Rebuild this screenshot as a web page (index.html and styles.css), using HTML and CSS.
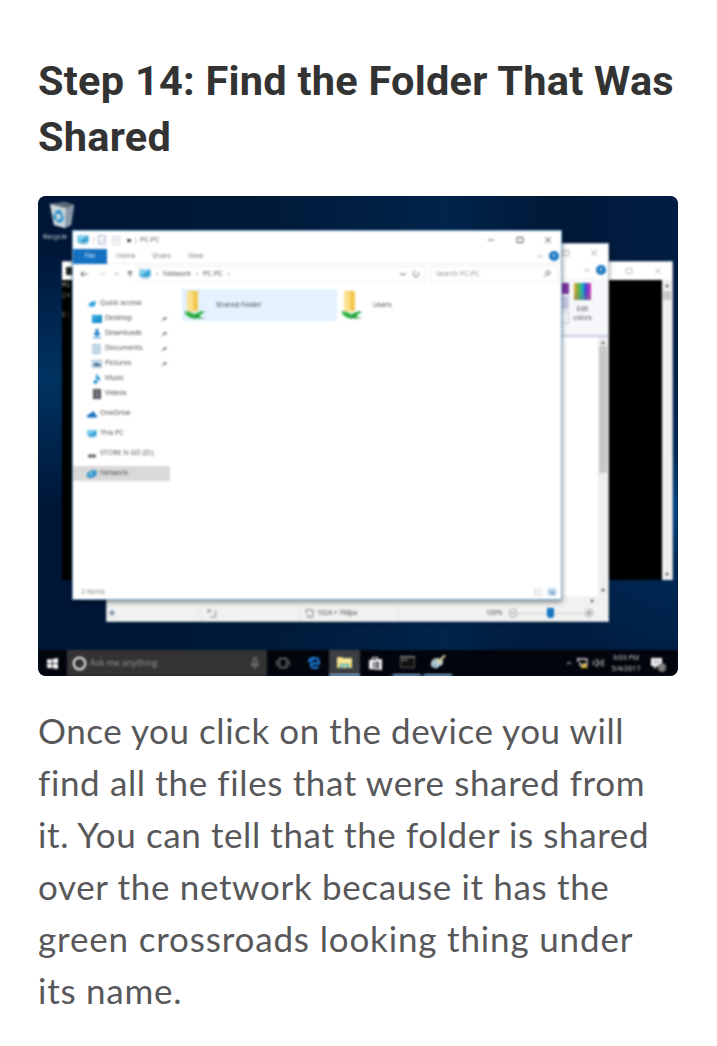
FILE: index.html
```html
<!DOCTYPE html>
<html lang="en">
<head>
<meta charset="utf-8">
<title>Step 14: Find the Folder That Was Shared</title>
<link rel="stylesheet" href="styles.css">
</head>
<body>
<svg class="defs" width="0" height="0" aria-hidden="true">
  <symbol id="pc" viewBox="0 0 12 10"><rect x=".5" y=".5" width="11" height="7" fill="#2f9fd4"/><path d="M1 1h10L3 6H1z" fill="#7fd0ef"/><path d="M5 7h3v1h2v1.3H2.500V8H5z" fill="#7cb4cf"/></symbol>
  <symbol id="folder" viewBox="0 0 22 30"><path d="M3 1h11v20H3z" fill="#f1c950"/><path d="M3 1l6 2v20l-6-3z" fill="#fbe08d"/><path d="M1 21l5 1 4 2 8-3 3 1-6 4 4 2-4 1-5-2-4 1-5-4z" fill="#35ba4b"/><path d="M4 24l6 3 7-4-3 4-4 2z" fill="#168b35"/><path d="M0 21l4 1M16 28h5" stroke="#a8b7b4"/></symbol>
  <symbol id="pin" viewBox="0 0 6 6"><path d="M.5 5.500L3 3M2 1.500L4.500 4M3 2.500L4.500 1l1 1L4 3.500z" stroke="#777" stroke-width=".9" fill="#777"/></symbol>
  <symbol id="x" viewBox="0 0 8 8"><path d="M1 1l6 6M7 1L1 7" stroke="currentColor" fill="none"/></symbol>
  <symbol id="max" viewBox="0 0 8 8"><path d="M1 1.500h6v5H1z" stroke="currentColor" fill="none"/></symbol>
  <symbol id="up" viewBox="0 0 8 8"><path d="M1.500 5.500L4 3l2.500 2.500" stroke="currentColor" fill="none"/></symbol>
  <symbol id="down" viewBox="0 0 8 8"><path d="M1.500 3L4 5.500 6.500 3" stroke="currentColor" fill="none"/></symbol>
</svg>
<main class="article">
  <h2 class="title">Step 14: Find the Folder That Was Shared</h2>

  <div class="shot"><div class="desktop">
    <div class="recycle">
      <svg width="28" height="28" viewBox="0 0 28 28"><path d="M2 3l15-2 9 3-3 20-6 3-11-3z" fill="#a9b8c4"/><path d="M2 3l16 4-1 20-11-3z" fill="#cbd5da"/><path d="M18 7l8-3-3 20-6 3z" fill="#8999a8"/><path d="M2 3l15-2 9 3-8 3z" fill="#596875"/><path d="M7 13l4-3 3 4M15 15l-2 5H9M8 19l-2-5" fill="none" stroke="#1587cf" stroke-width="2.300"/></svg>
      <span>Recycle</span>
    </div>

    <section class="win console">
      <header class="console-bar"><i class="console-icon"></i><span class="grow"></span><svg class="i8"><use href="#max"/></svg><svg class="i8"><use href="#x"/></svg></header>
      <div class="console-body">
        <pre class="console-text">Mi
(c

C:</pre>
        <div class="scroll"><i class="arrow-up"></i><i class="thumb"></i><span class="grow"></span><i class="arrow-down"></i></div>
      </div>
    </section>

    <section class="win paint">
      <header class="paint-bar"><svg class="i8"><use href="#max"/></svg><svg class="i8"><use href="#x"/></svg></header>
      <div class="paint-help"><svg class="i8"><use href="#up"/></svg><b class="help">?</b></div>
      <div class="ribbon">
        <div class="swatches"><i class="sw-a"></i><i class="sw-b"></i><i class="sw-c"></i></div>
        <div class="edit"><i class="rainbow"></i><span>Edit<br>colors</span></div>
      </div>
      <div class="paint-canvas"><div class="scroll"><i class="arrow-up"></i><i class="thumb tall"></i><span class="grow"></span><i class="arrow-down"></i></div></div>
      <div class="hscroll"><i class="arrow-right"></i></div>
      <footer class="paint-status">
        <span class="cell c1"><svg width="8" height="8" viewBox="0 0 8 8"><path d="M4 1v6M1 4h6" stroke="#6a7f98" stroke-width="1.500"/></svg></span>
        <span class="cell c2"><svg width="10" height="9" viewBox="0 0 10 9"><path d="M1 4V1h4M1 1l3 3M8.500 1v7H3" fill="none" stroke="#858b93"/></svg></span>
        <span class="cell c3"><svg width="10" height="9" viewBox="0 0 10 9"><path d="M1 4V1h7v7H3V5" fill="none" stroke="#777"/></svg><span>1024 × 768px</span></span>
        <span class="cell c4"><span class="zoom">100%</span><svg width="10" height="10" viewBox="0 0 10 10"><circle cx="5" cy="5" r="4" fill="#fafafa" stroke="#999"/><path d="M3 5h4" stroke="#666"/></svg><i class="track"><i class="knob"></i></i><svg width="10" height="10" viewBox="0 0 10 10"><circle cx="5" cy="5" r="4" fill="#eee" stroke="#aaa"/><path d="M3 5h4M5 3v4" stroke="#666"/></svg></span>
      </footer>
    </section>

    <section class="win explorer">
      <header class="ex-title">
        <svg width="12" height="10"><use href="#pc"/></svg><i class="sep"></i>
        <svg class="doc" width="8" height="10" viewBox="0 0 8 10"><path d="M.5.500h7v9h-7zM2 6l1.500 1.500L6 4" fill="#f7f9fd" stroke="#a9b4cd"/></svg>
        <svg class="doc" width="8" height="10" viewBox="0 0 8 10"><path d="M.5 1.500h7v8h-7zM2 4h4M2 6h4" fill="#fff" stroke="#ccd0d8"/></svg>
        <i class="dot"></i><i class="sep"></i><span>PC-PC</span>
        <span class="grow"></span>
        <svg class="i8 cap"><path d="M1 4h6" stroke="#666"/></svg><svg class="i8 cap" viewBox="0 0 8 8"><use href="#max"/></svg><svg class="i8" viewBox="0 0 8 8"><use href="#x"/></svg>
      </header>
      <nav class="tabs"><b class="file">File</b><span class="t1">Home</span><span class="t2">Share</span><span class="t3">View</span><span class="grow"></span><svg class="i8 pale"><use href="#down"/></svg><b class="help">?</b></nav>
      <div class="address">
        <svg class="nav" viewBox="0 0 58 10"><path d="M10 5H3M5.500 2.500L3 5l2.500 2.500M52 8V2M49.500 4.500L52 2l2.500 2.500" fill="none" stroke="#777" stroke-width="1.100"/><path d="M20 5h7M24.500 2.500L27 5l-2.500 2.500" fill="none" stroke="#ddd"/><path d="M37 4l1.500 2L40 4" fill="none" stroke="#999"/></svg>
        <div class="path"><svg width="12" height="10"><use href="#pc"/></svg><em>›</em><span>Network</span><em>›</em><span>PC-PC</span><em>›</em><span class="grow"></span><svg class="i8"><use href="#down"/></svg><svg class="i8 refresh" viewBox="0 0 8 8"><path d="M5.500 2a2.700 2.700 0 1 1-3 0V.500" fill="none" stroke="#777"/></svg></div>
        <div class="search"><span>Search PC-PC</span><svg class="i8" viewBox="0 0 8 8"><circle cx="5" cy="3" r="2" fill="none" stroke="#777"/><path d="M3.500 4.500L1 7" stroke="#777"/></svg></div>
      </div>
      <div class="ex-body">
        <ul class="tree">
          <li class="top"><svg viewBox="0 0 10 10"><path d="M1 6l3-3 5-1-1 5-4 1z" fill="#2da3de"/></svg><span>Quick access</span></li>
          <li><svg viewBox="0 0 10 10"><path d="M0 1h10v8H0z" fill="#1a8fcd"/><path d="M1 2h8L2 7H1z" fill="#31a9e2"/></svg><span>Desktop</span><svg class="pin"><use href="#pin"/></svg></li>
          <li><svg viewBox="0 0 10 10"><path d="M3.500 0h3v4H9L5 8 1 4h2.500z" fill="#2b7fc7"/><path d="M1 8h8v1.500H1z" fill="#6ba8db"/></svg><span>Downloads</span><svg class="pin"><use href="#pin"/></svg></li>
          <li><svg viewBox="0 0 10 10"><path d="M1 .5h7v9H1zM2.500 3h4M2.500 5h4M2.500 7h4" fill="#e6f1f7" stroke="#8ab1c9"/></svg><span>Documents</span><svg class="pin"><use href="#pin"/></svg></li>
          <li><svg viewBox="0 0 10 10"><path d="M.5 1.500h9v7h-9z" fill="#d9edfa" stroke="#9bb1c4"/><path d="M1 7l3-4 2 2 1-1 2 3z" fill="#365f88"/></svg><span>Pictures</span><svg class="pin"><use href="#pin"/></svg></li>
          <li><svg viewBox="0 0 10 10"><path d="M4.500 8V0q0 2 2 3t1 4q0-2-2-2.500" fill="#35a5e3" stroke="#1c8ccc"/><circle cx="3.500" cy="8" r="2" fill="#1c8ccc"/></svg><span>Music</span></li>
          <li><svg viewBox="0 0 10 10"><path d="M1 0h8v10H1z" fill="#48444d"/><path d="M3 1h4v8H3z" fill="#77727d"/><path d="M2 1v8M8 1v8" stroke="#aaa" stroke-width=".7" stroke-dasharray="1"/></svg><span>Videos</span></li>
          <li class="top root"><svg viewBox="0 0 10 10"><path d="M0 8.500V6.500l2-1.500 1.500-.3Q4.500 2 6.500 2.500 8 3 8 5l2 1.500v2z" fill="#1870bd"/></svg><span>OneDrive</span></li>
          <li class="top root"><svg viewBox="0 0 12 10"><use href="#pc"/></svg><span>This PC</span></li>
          <li class="top root"><svg viewBox="0 0 10 10"><path d="M1 6h8v2.500H1z" fill="#666"/><path d="M1 6l1-1h6l1 1z" fill="#aaa"/></svg><span>STORE N GO (D:)</span></li>
          <li class="top root active"><svg viewBox="0 0 10 10"><path d="M0 4l5-3 5 1-1 5-5 2-4-1z" fill="#278cc0"/><path d="M1 5l4-3 2 3-4 2z" fill="#72bee0"/></svg><span>Network</span></li>
        </ul>
        <div class="files">
          <div class="item selected"><svg width="22" height="30"><use href="#folder"/></svg><span>Shared Folder</span></div>
          <div class="item"><svg width="22" height="30"><use href="#folder"/></svg><span>Users</span></div>
        </div>
      </div>
      <footer class="ex-status"><span>2 items</span><svg width="24" height="8" viewBox="0 0 24 8"><path d="M1 1h2M1 4h2M1 7h2M5 1h2M5 4h2M5 7h2M9 1h1M9 4h1M9 7h1" stroke="#aaa"/><path d="M15.500 1h7v6h-7z" fill="#d4eafb" stroke="#8db4d3"/><path d="M17 5l2-2 3 3z" fill="#326eaa"/></svg></footer>
    </section>

    <div class="taskbar">
      <div class="start"><svg width="11" height="11" viewBox="0 0 11 11"><path d="M0 1.500L4.800 1v4.200H0zM5.600.900L11 0v5.200H5.600zM0 6h4.800v4.200L0 9.700zM5.600 6H11v5l-5.400-.8z" fill="#fff"/></svg></div>
      <div class="ask"><svg width="15" height="15" viewBox="0 0 15 15"><circle cx="7.500" cy="7.500" r="5.800" fill="none" stroke="#ddd" stroke-width="2.200"/></svg><span>Ask me anything</span><svg width="8" height="12" viewBox="0 0 8 12"><path d="M2.500 1h3v6h-3zM1 5v4h6V5M4 9v3" fill="none" stroke="#888"/></svg></div>
      <div class="app"><svg width="14" height="12" viewBox="0 0 14 12"><path d="M3.500 1.500h7v9h-7zM1 3v6M13 3v6" fill="none" stroke="#777" stroke-width="1.300"/></svg></div>
      <div class="app"><svg width="14" height="14" viewBox="0 0 14 14"><path d="M1.500 6Q3 1.500 7.500 1.800 12 2 12 7.500H4.500M4 7q-.5 5 4 5 2 0 3.500-1M2 6q2-2.500 5-2.500" fill="none" stroke="#1c76d3" stroke-width="2.300"/></svg></div>
      <div class="app running current"><svg width="15" height="13" viewBox="0 0 15 13"><path d="M0 1h5l1 1h9v10H0z" fill="#eedb80"/><path d="M0 4h15v2H0z" fill="#fff0ad"/><path d="M3 12V8h9v4h-2v-2H5v2z" fill="#55b7d1"/></svg></div>
      <div class="app"><svg width="15" height="15" viewBox="0 0 15 15"><path d="M1 4l13-1v11L1 13z" fill="#f3f3f3"/><path d="M4.500 4V1.500h5V4" fill="none" stroke="#eee" stroke-width="1.200"/><path d="M5 6.500h2v2H5zM8 6h3v2.500H8zM5 9.500h2v2H5zM8 9.500h3V12l-3-.3z" fill="#222"/></svg></div>
      <div class="app running"><svg width="15" height="12" viewBox="0 0 15 12"><path d="M.5.500h14v11H.5z" fill="#111" stroke="#555"/><path d="M0 1h15M2 3l2 1-2 1M5 4h3" stroke="#aaa" fill="none"/></svg></div>
      <div class="app running"><svg width="16" height="14" viewBox="0 0 16 14"><path d="M1 8q1-5 7-5 6 1 5 5-1 3-4 3-1 3-4 2-5-1-4-5" fill="#bcd2dc"/><path d="M8 8l7-8" stroke="#e5d3a7" stroke-width="2"/><circle cx="5" cy="6" r="1" fill="#65965a"/><circle cx="9" cy="5" r="1" fill="#d19c49"/><circle cx="5" cy="10" r="1" fill="#4276b8"/></svg></div>
      <span class="grow"></span>
      <div class="tray"><svg class="i8"><use href="#up"/></svg><svg width="13" height="12" viewBox="0 0 13 12"><path d="M1 2h10v6H4V5M2 1v4M5 10h5" fill="none" stroke="#ddd" stroke-width="1.300"/><path d="M8 5l4 6H5z" fill="#e7b93d"/></svg><svg width="12" height="10" viewBox="0 0 12 10"><path d="M1 3.500h2L5.500 1v8L3 6.500H1zM7 3q1.500 2 0 4M9 2q2 3 0 6M11 1q2 4 0 8" fill="none" stroke="#aaa"/></svg></div>
      <div class="clock"><span>9:03 PM</span><span>5/4/2017</span></div>
      <svg class="notes" width="15" height="15" viewBox="0 0 15 15"><path d="M0 1h11v8H6l-3 3V9H0z" fill="#fff"/><path d="M2 3.500h7M2 6h7" stroke="#888"/><circle cx="11" cy="10.500" r="3.800" fill="#555" stroke="#aaa"/><path d="M10 9h2v1.500h-2V12h2" stroke="#ddd" fill="none" stroke-width=".7"/></svg>
    </div>
  </div></div>

  <p class="copy"><span class="l1">Once you click on the device you will</span> <span class="l2">find all the files that were shared from</span> <span class="l3">it. You can tell that the folder is shared</span> <span class="l4">over the network because it has the</span> <span class="l5">green crossroads looking thing under</span> <span class="l6">its name.</span></p>
</main>
</body>
</html>
```
FILE: styles.css
```css
* { box-sizing: border-box; }
body { margin: 0; background: #fff; }
.defs { position: absolute; }
svg { display: block; flex: none; }
i, em { font-style: normal; }
.grow { flex: 1; }
.article { padding: 53px 38px 0; width: 717px; height: 1046px; overflow: hidden; }
.title { margin: 0; width: 645px; font: 700 41.5px/56px Roboto, sans-serif; letter-spacing: .25px; color: #333; }
.shot { width: 640px; height: 480px; margin-top: 31px; border-radius: 8px; overflow: hidden; background: #001a3a; }
.desktop {
  position: relative; width: 640px; height: 480px; overflow: hidden;
  font: 7px/1.2 "Open Sans", sans-serif; color: #444; filter: blur(.8px);
  background:
    radial-gradient(ellipse at 103% 65%, #004a88 0, rgba(0,60,115,.4) 12%, transparent 38%),
    radial-gradient(ellipse at 0 38%, #003463 0, transparent 30%),
    linear-gradient(90deg, #001638 0, #001a39 35%, #00244b 64%, #001939 80%, #001d43 100%);
}
.i8 { width: 8px; height: 8px; }
.recycle { position: absolute; left: 10px; top: 5px; width: 40px; color: #ddd; }
.recycle span { display: block; margin: 4px 0 0 -5px; }
.win { position: absolute; display: flex; flex-direction: column; }
.console { left: 24px; top: 65px; width: 611px; height: 319px; background: #000; border: 1px solid #b8bdc7; border-left: 0; border-bottom: 0; }
.console-bar { height: 18px; background: #fff; display: flex; align-items: center; padding-right: 10px; gap: 21px; color: #bbb; }
.console-icon { width: 6px; height: 8px; margin-left: 4px; background: #222; }
.console-body { flex: 1; display: flex; justify-content: space-between; }
.console-text { margin: 0; color: #aaa; font: 7px/10px "Liberation Mono", monospace; }
.scroll { width: 10px; background: #eee; display: flex; flex-direction: column; align-items: center; padding: 4px 0; }
.arrow-up { border: 2.500px solid transparent; border-top: 0; border-bottom: 3px solid #555; }
.arrow-down { border: 2.500px solid transparent; border-bottom: 0; border-top: 3px solid #555; }
.arrow-right { border: 2.500px solid transparent; border-right: 0; border-left: 3px solid #555; }
.thumb { width: 8px; height: 9px; margin-top: 4px; background: #c7c7c7; }
.thumb.tall { height: 127px; }
.paint { left: 68px; top: 47px; width: 503px; height: 379px; background: #f6f7fb; border: 1px solid #b9c3d2; box-shadow: 0 0 5px #0006; }
.paint-bar { height: 18px; background: #fff; display: flex; justify-content: flex-end; align-items: center; gap: 20px; padding-right: 10px; color: #aaa; }
.paint-help { height: 16px; background: #fff; display: flex; justify-content: flex-end; align-items: center; gap: 5px; padding-right: 2px; color: #999; }
.help { width: 10px; height: 10px; border-radius: 50%; background: #1976c0; color: #fff; font-size: 6px; line-height: 10px; text-align: center; }
.ribbon { height: 59px; display: flex; justify-content: flex-end; padding: 5px 12px 0; border-bottom: 2px solid #c8cbe0; }
.swatches { width: 9px; display: grid; gap: 2px; grid-template-rows: 11px 13px 13px; }
.sw-a { background: #79369e; }
.sw-b { background: #c9c8e3; }
.sw-c { border: 1px solid #ccc; }
.edit { width: 27px; display: flex; flex-direction: column; align-items: center; gap: 5px; font-size: 6.500px; line-height: 8.500px; text-align: center; }
.rainbow { width: 17px; height: 17px; background: linear-gradient(transparent 50%, #7778), linear-gradient(90deg, #e8a22c, #58b34b 30%, #1ab7be 50%, #3448d4 66%, #e62eb4); }
.paint-canvas { flex: 1; background: #fff; display: flex; justify-content: flex-end; }
.paint-canvas .thumb { margin-top: 2px; }
.hscroll { height: 9px; background: #f1f1f1; display: flex; justify-content: flex-end; align-items: center; padding-right: 14px; }
.paint-status { height: 16px; background: #f1f1f1; display: flex; align-items: center; font-size: 6.500px; }
.cell { height: 16px; display: flex; align-items: center; border-right: 1px solid #e1e1e1; }
.c1 { width: 94px; padding-left: 1px; }
.c2 { width: 99px; padding-left: 6px; }
.c3 { width: 98px; padding-left: 5px; gap: 2px; }
.c4 { flex: 1; padding-left: 88px; border: 0; }
.zoom { width: 22px; }
.track { width: 66px; height: 1px; background: #ccc; display: flex; align-items: center; padding-left: 29px; }
.knob { width: 7px; height: 10px; background: #1573bf; border-radius: 0 0 3px 3px; }
.explorer { left: 34px; top: 34px; width: 490px; height: 370px; background: #fff; border: 1px solid #72a8cf; box-shadow: 0 2px 5px #0007; }
.ex-title { height: 18px; display: flex; align-items: center; padding: 0 9px 0 4px; color: #555; }
.sep { width: 1px; height: 7px; background: #ccc; margin: 0 4px; }
.doc { margin-right: 6px; }
.dot { width: 4px; height: 3px; margin-left: 1px; background: #444; border-radius: 1px; }
.cap { margin-right: 20.500px; }
.tabs { height: 15px; display: flex; align-items: center; padding-right: 2px; border-bottom: 1px solid #eee; color: #777; }
.file { width: 34px; height: 15px; background: #1470c0; color: #d9ebfb; font-weight: 400; line-height: 14px; text-align: center; }
.t1 { margin-left: 9px; width: 36px; }
.t2 { width: 36px; }
.pale { color: #aaa; margin-right: 5px; }
.address { height: 20px; display: flex; align-items: center; }
.nav { width: 58px; height: 10px; margin-left: 5px; }
.path { width: 290px; height: 16px; margin-left: -1px; padding: 0 4px; display: flex; align-items: center; gap: 5px; border: 1px solid #eee; border-left: 0; }
.path em { color: #666; }
.search { width: 128px; height: 16px; margin-left: 5px; padding: 0 6px 0 5px; display: flex; align-items: center; justify-content: space-between; border: 1px solid #eee; color: #888; }
.ex-body { flex: 1; display: flex; padding-top: 5px; }
.tree { list-style: none; width: 97px; margin: 7px 0 0; padding: 0; }
.tree li { height: 15px; padding-left: 19px; display: flex; align-items: center; gap: 3px; }
.tree li > svg:first-child { width: 10px; height: 10px; }
.tree .top { padding-left: 14px; }
.tree .root { margin-top: 5px; }
.tree .active { background: #d9d9d9; }
.tree .pin { width: 6px; height: 6px; margin-left: auto; margin-right: 3px; }
.files { display: flex; align-items: flex-start; margin-left: 12px; gap: 4px; }
.item { width: 155px; height: 32px; display: flex; align-items: center; gap: 10px; padding-left: 2px; }
.item + .item { padding-left: 0; }
.selected { background: #e3f2fe; }
.ex-status { height: 14px; display: flex; justify-content: space-between; align-items: center; padding: 0 4px 0 8px; color: #777; }
.taskbar { position: absolute; left: 0; top: 454px; width: 640px; height: 26px; display: flex; align-items: center; background: #02050c; }
.start { width: 29px; display: grid; place-items: center; }
.ask { width: 200px; height: 26px; background: #333; display: flex; align-items: center; padding: 0 8px 0 5px; gap: 3px; color: #999; font-size: 8.800px; }
.ask svg:last-child { margin-left: auto; }
.app { width: 31px; height: 26px; display: grid; place-items: center; }
.running { border-bottom: 2px solid #86aed1; border-left: 3px solid transparent; border-right: 2px solid transparent; background-clip: padding-box; }
.current { background: #3b3e42; border-left-width: 0; border-right-width: 0; }
.tray { display: flex; align-items: center; gap: 3px; margin-right: 1px; color: #ccc; }
.clock { width: 42px; display: flex; flex-direction: column; align-items: center; color: #ddd; font-size: 7px; line-height: 11px; }
.notes { margin: 2px 12px 0 4px; }
.copy { margin: 28px 0 0; font: 400 35px/52px Lato, "Open Sans", sans-serif; color: #58585a; width: 660px; }
.copy span { display: block; white-space: nowrap; }
.l1 { letter-spacing: .56px; }
.l2 { letter-spacing: .63px; }
.l3 { letter-spacing: .6px; }
.l4 { letter-spacing: .65px; }
.l5 { letter-spacing: .83px; }
.l6 { letter-spacing: .75px; }
```
